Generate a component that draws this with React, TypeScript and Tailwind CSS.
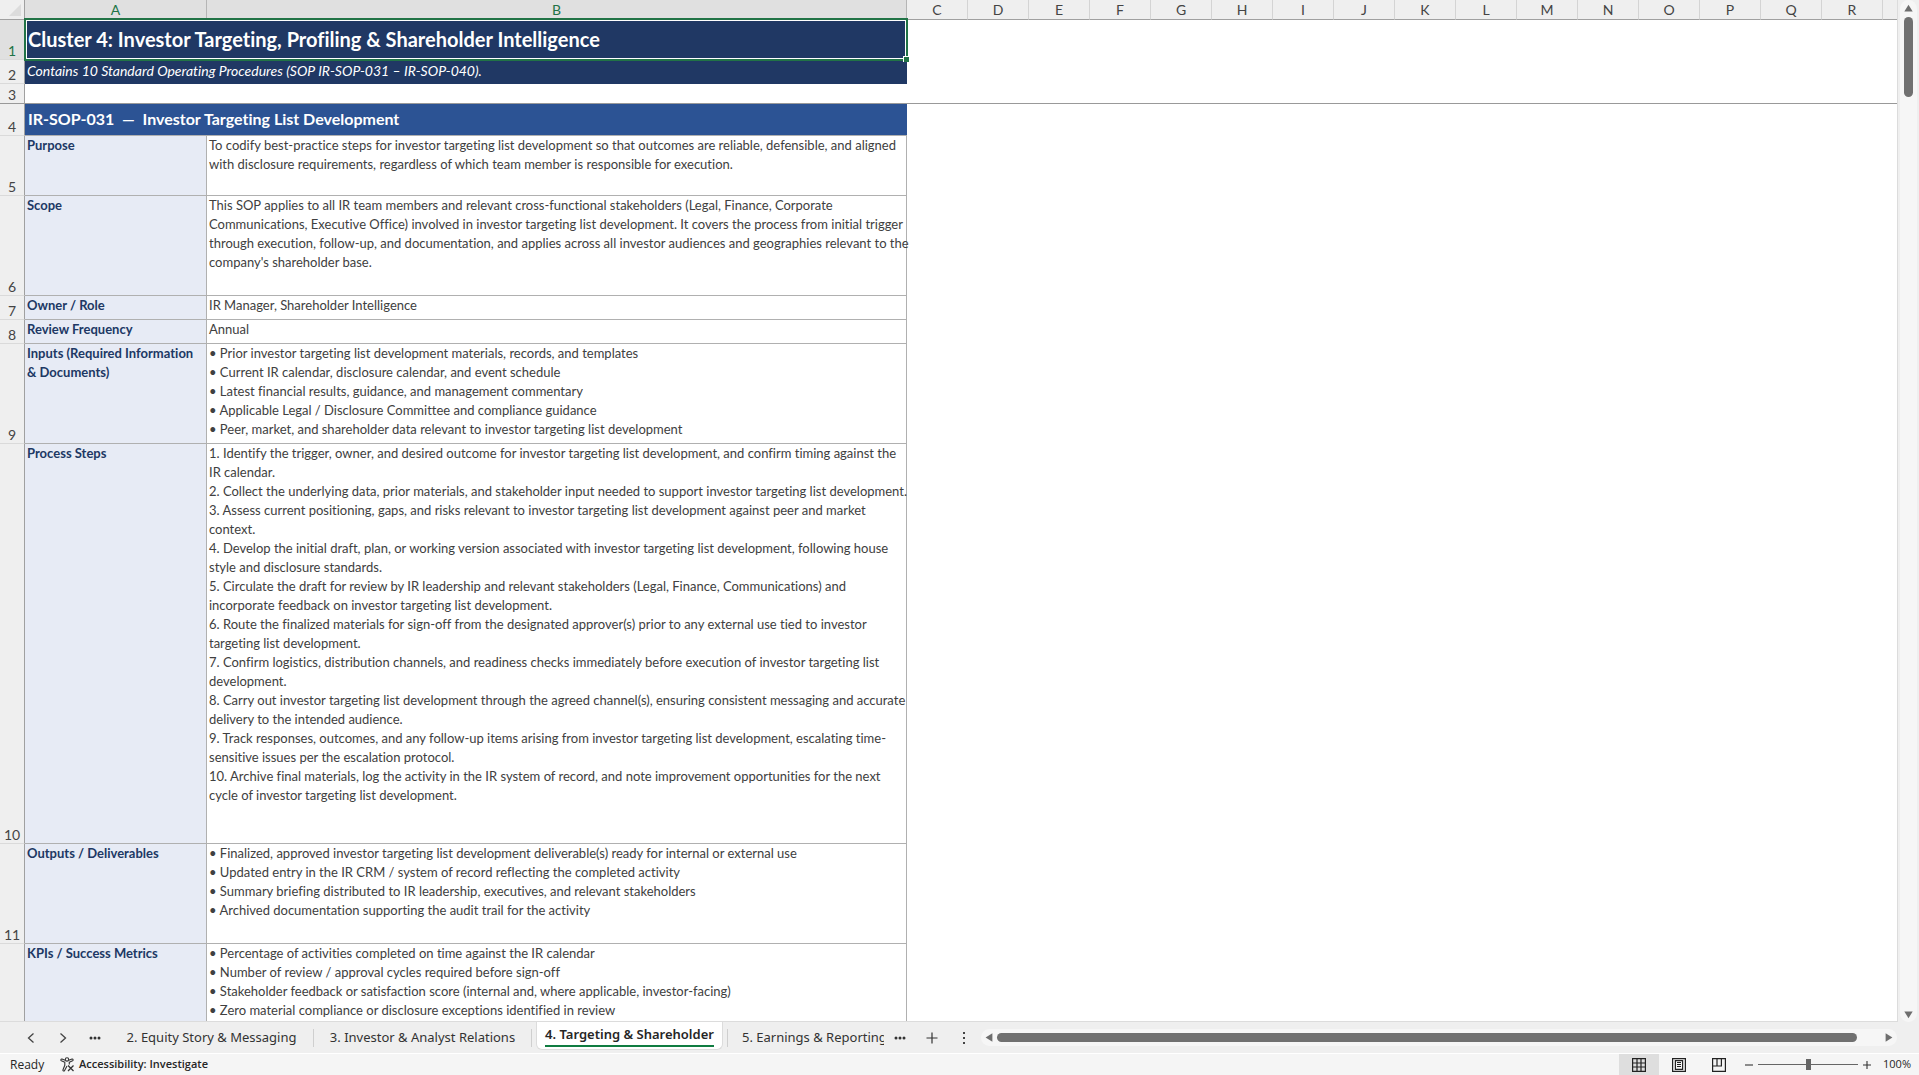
import React from 'react';

interface SopRow {
  num?: number;
  label: string;
  height: string;
  lines: string[];
}

const extraColumns = 'CDEFGHIJKLMNOPQR'.split('');

const sopRows: SopRow[] = [
  {
    num: 5,
    label: 'Purpose',
    height: 'h-[60px]',
    lines: [
      'To codify best-practice steps for investor targeting list development so that outcomes are reliable, defensible, and aligned',
      'with disclosure requirements, regardless of which team member is responsible for execution.',
    ],
  },
  {
    num: 6,
    label: 'Scope',
    height: 'h-[100px]',
    lines: [
      'This SOP applies to all IR team members and relevant cross-functional stakeholders (Legal, Finance, Corporate',
      'Communications, Executive Office) involved in investor targeting list development. It covers the process from initial trigger',
      'through execution, follow-up, and documentation, and applies across all investor audiences and geographies relevant to the',
      "company's shareholder base.",
    ],
  },
  { num: 7, label: 'Owner / Role', height: 'h-6', lines: ['IR Manager, Shareholder Intelligence'] },
  { num: 8, label: 'Review Frequency', height: 'h-6', lines: ['Annual'] },
  {
    num: 9,
    label: 'Inputs (Required Information\n& Documents)',
    height: 'h-[100px]',
    lines: [
      '• Prior investor targeting list development materials, records, and templates',
      '• Current IR calendar, disclosure calendar, and event schedule',
      '• Latest financial results, guidance, and management commentary',
      '• Applicable Legal / Disclosure Committee and compliance guidance',
      '• Peer, market, and shareholder data relevant to investor targeting list development',
    ],
  },
  {
    num: 10,
    label: 'Process Steps',
    height: 'h-[400px]',
    lines: [
      '1. Identify the trigger, owner, and desired outcome for investor targeting list development, and confirm timing against the',
      'IR calendar.',
      '2. Collect the underlying data, prior materials, and stakeholder input needed to support investor targeting list development.',
      '3. Assess current positioning, gaps, and risks relevant to investor targeting list development against peer and market',
      'context.',
      '4. Develop the initial draft, plan, or working version associated with investor targeting list development, following house',
      'style and disclosure standards.',
      '5. Circulate the draft for review by IR leadership and relevant stakeholders (Legal, Finance, Communications) and',
      'incorporate feedback on investor targeting list development.',
      '6. Route the finalized materials for sign-off from the designated approver(s) prior to any external use tied to investor',
      'targeting list development.',
      '7. Confirm logistics, distribution channels, and readiness checks immediately before execution of investor targeting list',
      'development.',
      '8. Carry out investor targeting list development through the agreed channel(s), ensuring consistent messaging and accurate',
      'delivery to the intended audience.',
      '9. Track responses, outcomes, and any follow-up items arising from investor targeting list development, escalating time-',
      'sensitive issues per the escalation protocol.',
      '10. Archive final materials, log the activity in the IR system of record, and note improvement opportunities for the next',
      'cycle of investor targeting list development.',
    ],
  },
  {
    num: 11,
    label: 'Outputs / Deliverables',
    height: 'h-[100px]',
    lines: [
      '• Finalized, approved investor targeting list development deliverable(s) ready for internal or external use',
      '• Updated entry in the IR CRM / system of record reflecting the completed activity',
      '• Summary briefing distributed to IR leadership, executives, and relevant stakeholders',
      '• Archived documentation supporting the audit trail for the activity',
    ],
  },
  {
    label: 'KPIs / Success Metrics',
    height: 'h-[100px]',
    lines: [
      '• Percentage of activities completed on time against the IR calendar',
      '• Number of review / approval cycles required before sign-off',
      '• Stakeholder feedback or satisfaction score (internal and, where applicable, investor-facing)',
      '• Zero material compliance or disclosure exceptions identified in review',
    ],
  },
];

const RowHeader = ({ num, active }: { num?: number; active?: boolean }) => (
  <th
    scope="row"
    className={`border-r border-r-[#a0a0a0] border-b p-0 align-bottom text-sm leading-4 font-normal ${
      active ? 'bg-[#e0e0e0] text-[#217346]' : 'bg-[#efefef] text-[#444]'
    } ${num === 3 ? 'border-b-[#999]' : 'border-b-[#dadada]'}`}
  >
    {num}
  </th>
);

const Sheet = () => (
  <table className="w-full table-fixed border-separate border-spacing-0 font-['Lato','Liberation_Sans',sans-serif] [font-variant-ligatures:none]">
    <colgroup>
      <col className="w-[25px]" />
      <col className="w-[182px]" />
      <col className="w-[700px]" />
      {extraColumns.map((c) => (
        <col key={c} className="w-[61px]" />
      ))}
      <col />
    </colgroup>
    <thead>
      <tr className="h-5 text-sm leading-[18px] text-[#444]">
        <th className="border-r border-b border-[#a0a0a0] bg-[#efefef] p-0">
          <svg viewBox="0 0 24 19" className="h-[19px] w-6">
            <path d="M21 4v12H9z" fill="#dcdcdc" />
          </svg>
        </th>
        {['A', 'B'].map((c) => (
          <th key={c} scope="col" className="border-r border-b border-r-[#b5b5b5] border-b-[#a0a0a0] bg-[#e0e0e0] p-0 align-bottom font-normal text-[#217346]">
            {c}
          </th>
        ))}
        {extraColumns.map((c) => (
          <th key={c} scope="col" className="border-r border-b border-r-[#d4d4d4] border-b-[#a0a0a0] bg-[#efefef] p-0 align-bottom font-normal">
            {c}
          </th>
        ))}
        <th className="border-b border-[#a0a0a0] bg-[#efefef] p-0" />
      </tr>
    </thead>
    <tbody>
      <tr className="h-10">
        <RowHeader num={1} active />
        <td colSpan={2} className="relative bg-[#203864] pt-0 pr-0 pb-0.5 pl-[3px] text-xl leading-6 font-bold text-white">
          Cluster 4: Investor Targeting, Profiling &amp; Shareholder Intelligence
          {/* selection frame and fill handle */}
          <div className="absolute -top-0.5 -right-px -bottom-px -left-px border-2 border-[#217346]">
            <div className="h-full border border-white" />
            <div className="absolute -right-[3px] -bottom-[3px] size-1.5 border-t border-l border-white bg-[#217346]" />
          </div>
        </td>
        <td colSpan={17} className="p-0" />
      </tr>
      <tr className="h-6">
        <RowHeader num={2} />
        <td colSpan={2} className="bg-[#203864] pt-0 pr-0 pb-0.5 pl-0.5 text-sm leading-[18px] text-white italic">
          Contains 10 Standard Operating Procedures (SOP IR-SOP-031 – IR-SOP-040).
        </td>
        <td colSpan={17} className="p-0" />
      </tr>
      <tr className="h-5">
        <RowHeader num={3} />
        <td colSpan={19} className="border-b border-[#999] p-0" />
      </tr>
      <tr className="h-8">
        <RowHeader num={4} />
        <td colSpan={2} className="border-b border-[#b0b0b0] bg-[#2c5394] pt-0 pr-0 pb-0.5 pl-[3px] text-base leading-5 font-bold whitespace-pre text-white">
          {'IR-SOP-031  —  Investor Targeting List Development'}
        </td>
        <td colSpan={17} className="p-0" />
      </tr>
      {sopRows.map((row) => (
        <tr key={row.label} className={`${row.height} text-[13px] leading-[19px]`}>
          <RowHeader num={row.num} />
          <td className="border-r border-b border-[#b0b0b0] bg-[#e7ebf5] py-0 pr-0 pl-0.5 align-top font-bold whitespace-pre text-[#203864]">
            {row.label}
          </td>
          <td className="border-r border-b border-[#b0b0b0] py-0 pr-0 pl-0.5 align-top whitespace-pre text-[#404040]">
            {row.lines.join('\n')}
          </td>
          <td colSpan={17} className="p-0" />
        </tr>
      ))}
    </tbody>
  </table>
);

const VerticalScrollbar = () => (
  <div className="mr-0.5 ml-0.5 flex w-[17px] flex-col items-center rounded-full bg-[#f6f6f6] pt-1 pb-[3px]">
    <button aria-label="Scroll up">
      <svg viewBox="0 0 9 8" className="h-2 w-[9px]">
        <path d="M4.5 .8 8.7 7.4H.3z" fill="#6e6e6e" />
      </svg>
    </button>
    <div className="mt-[5px] h-20 w-[9px] rounded-full bg-[#707070]" />
    <button aria-label="Scroll down" className="mt-auto">
      <svg viewBox="0 0 9 8" className="h-2 w-[9px]">
        <path d="M4.5 7.2 8.7.6H.3z" fill="#6e6e6e" />
      </svg>
    </button>
  </div>
);

const Dots = () => (
  <svg viewBox="0 0 12 4" className="h-1 w-3" fill="#333">
    <circle cx="2" cy="2" r="1.5" />
    <circle cx="6" cy="2" r="1.5" />
    <circle cx="10" cy="2" r="1.5" />
  </svg>
);

const Separator = () => <div className="h-[18px] w-px shrink-0 bg-[#cfcfcf]" />;

const TabBar = () => (
  <div className="flex h-[31px] shrink-0 items-center bg-[#efefef] font-['Noto_Sans','Open_Sans',sans-serif] text-[13px] text-[#333]">
    <div className="flex w-[110px] shrink-0 items-center pl-[27px]">
      <button aria-label="Previous sheet" className="mr-6">
        <svg viewBox="0 0 8 10" className="h-2.5 w-2" fill="none" stroke="#444" strokeWidth="1.3">
          <path d="M6.5.5 1.5 5l5 4.5" />
        </svg>
      </button>
      <button aria-label="Next sheet" className="mr-[22px]">
        <svg viewBox="0 0 8 10" className="h-2.5 w-2" fill="none" stroke="#444" strokeWidth="1.3">
          <path d="m1.5.5 5 4.5-5 4.5" />
        </svg>
      </button>
      <button aria-label="More sheets" className="flex">
        <Dots />
      </button>
    </div>
    <button className="w-[203px] shrink-0 whitespace-nowrap">2. Equity Story &amp; Messaging</button>
    <Separator />
    <button className="w-[217px] shrink-0 whitespace-nowrap">3. Investor &amp; Analyst Relations</button>
    <Separator />
    <button className="mx-[3px] flex h-full shrink-0 justify-center px-px pb-[3px]">
      <span className="flex h-7 w-[187px] justify-center rounded-b-md border border-t-0 border-[#dcdcdc] bg-white">
        <span className="h-[25px] border-b-2 border-[#107c41] pt-0.5 leading-5 font-semibold whitespace-nowrap text-[#262626]">
          4. Targeting &amp; Shareholder
        </span>
      </span>
    </button>
    <Separator />
    <button className="ml-3.5 w-[142px] shrink-0 overflow-hidden text-left whitespace-nowrap">5. Earnings &amp; Reporting</button>
    <button aria-label="More sheets to the right" className="ml-2.5 flex shrink-0">
      <Dots />
    </button>
    <button aria-label="New sheet" className="ml-5 shrink-0">
      <svg viewBox="0 0 12 12" className="size-3" stroke="#333" strokeWidth="1.2">
        <path d="M6 .5v11M.5 6h11" />
      </svg>
    </button>
    <div className="ml-6 flex w-1 shrink-0 flex-col items-center gap-[3px]">
      <span className="size-0.5 bg-[#444]" />
      <span className="size-0.5 bg-[#444]" />
      <span className="size-0.5 bg-[#444]" />
    </div>
    <div className="mr-[22px] ml-[15px] flex h-[17px] flex-1 items-center rounded-full bg-[#f6f6f6] px-1">
      <button aria-label="Scroll left">
        <svg viewBox="0 0 8 9" className="h-[9px] w-2">
          <path d="M.6 4.5 7.4.3v8.4z" fill="#6e6e6e" />
        </svg>
      </button>
      <div className="mr-7 ml-1 h-[9px] flex-1 rounded-full bg-[#707070]" />
      <button aria-label="Scroll right">
        <svg viewBox="0 0 8 9" className="h-[9px] w-2">
          <path d="M7.4 4.5.6.3v8.4z" fill="#6e6e6e" />
        </svg>
      </button>
    </div>
  </div>
);

const StatusBar = () => (
  <div className="flex h-[22px] shrink-0 items-center border-t border-white bg-[#f5f5f5] text-xs text-[#262626]">
    <span className="ml-2.5 w-[50px]">Ready</span>
    <button className="flex items-center gap-1 text-[11px] font-semibold whitespace-nowrap">
      <svg viewBox="0 0 15 15" className="size-[15px]" fill="none" stroke="#333" strokeWidth="1.1" strokeLinejoin="round">
        <circle cx="7" cy="2.4" r="1.7" />
        <path d="M5.2 3.3 2 2.1C.9 1.8.4 3.3 1.4 3.8l3.4 1.5v3L3 12.8c-.4 1.2 1.1 1.7 1.6.7L7 9" />
        <path d="M8.8 3.3 12 2.1c1.1-.3 1.6 1.2.6 1.7L9.3 5.3v2.2" />
        <path d="m8 8.5 5.5 5.5M13.5 8.5 8 14" strokeWidth="1.3" />
      </svg>
      Accessibility: Investigate
    </button>
    <div className="ml-auto flex h-full items-center">
      <button aria-label="Normal view" className="flex h-full w-10 items-center justify-center bg-[#dedede]">
        <svg viewBox="0 0 14 14" className="size-3.5" fill="none" stroke="#222" strokeWidth="1.2">
          <path d="M.6.6h12.8v12.8H.6zM5 .6v12.8M9 .6v12.8M.6 5h12.8M.6 9h12.8" />
        </svg>
      </button>
      <button aria-label="Page layout view" className="flex h-full w-10 items-center justify-center">
        <svg viewBox="0 0 14 14" className="size-3.5" fill="none" stroke="#222" strokeWidth="1.2">
          <path d="M.6.6h12.8v12.8H.6zM3.4 2.6h7.2v8.8H3.4z" />
          <path d="M5 4.5h4M5 6.5h4M5 8.5h4" strokeWidth="1" />
        </svg>
      </button>
      <button aria-label="Page break preview" className="flex h-full w-10 items-center justify-center">
        <svg viewBox="0 0 14 14" className="size-3.5" fill="none" stroke="#222" strokeWidth="1.2">
          <path d="M.6.6h12.8v12.8H.6zM.6 8h8.8V.6M5 .6V8" />
        </svg>
      </button>
      <button aria-label="Zoom out" className="ml-1.5">
        <svg viewBox="0 0 8 8" className="size-2" stroke="#333" strokeWidth="1.1">
          <path d="M0 4h8" />
        </svg>
      </button>
      <input
        type="range"
        aria-label="Zoom"
        min={0}
        max={100}
        defaultValue={50}
        className="mx-[5px] h-3 w-[100px] appearance-none bg-[linear-gradient(#666,#666)] bg-[length:100%_1px] bg-center bg-no-repeat [&::-webkit-slider-thumb]:h-[11px] [&::-webkit-slider-thumb]:w-[5px] [&::-webkit-slider-thumb]:appearance-none [&::-webkit-slider-thumb]:bg-[#666]"
      />
      <button aria-label="Zoom in">
        <svg viewBox="0 0 8 8" className="size-2" stroke="#333" strokeWidth="1.1">
          <path d="M0 4h8M4 0v8" />
        </svg>
      </button>
      <button className="mr-2 w-10 text-right text-[11px]">100%</button>
    </div>
  </div>
);

const App = () => (
  <div className="flex h-screen flex-col overflow-hidden bg-[#efefef] font-['Open_Sans','Noto_Sans',sans-serif]">
    <div className="flex min-h-0 flex-1">
      <div className="min-w-0 flex-1 overflow-hidden border-r border-b border-[#dcdcdc] bg-white">
        <Sheet />
      </div>
      <VerticalScrollbar />
    </div>
    <TabBar />
    <StatusBar />
  </div>
);

export default App;
